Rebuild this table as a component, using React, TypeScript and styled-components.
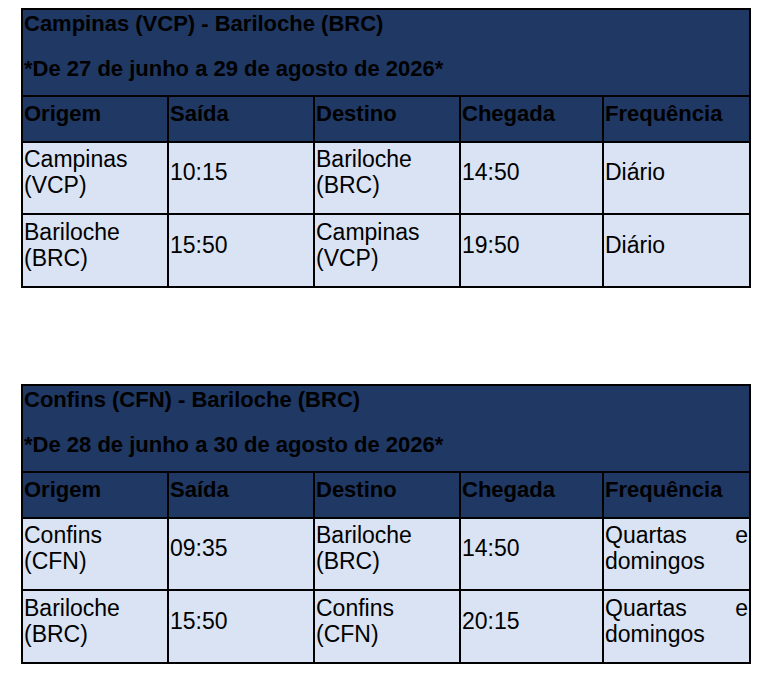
import React from 'react';
import styled, { createGlobalStyle } from 'styled-components';

const GlobalStyle = createGlobalStyle`
  html, body {
    margin: 0;
    padding: 0;
    background: #fff;
  }
  body {
    font-family: "Liberation Sans", Arial, sans-serif;
    color: #000;
  }
`;

const Page = styled.div`
  display: flex;
  flex-direction: column;
  gap: 96px;
  padding: 8px 0 0 21px;
`;

const Table = styled.div`
  display: grid;
  width: 730px;
  grid-template-columns: 144px 144px 144px 141px 145px;
  grid-template-rows: 85px 44px 70px 71px;
  gap: 2px;
  padding: 2px;
  box-sizing: border-box;
  background: #000;
`;

const TitleBlock = styled.div`
  grid-column: 1 / -1;
  background: #1f3864;
  display: flex;
  flex-direction: column;
  padding: 2px 0 0 1px;
`;

const Title = styled.div`
  font-size: 22px;
  font-weight: bold;
  line-height: 24px;
  height: 24px;
  margin-bottom: 21px;
`;

const HeadCell = styled.div`
  background: #1f3864;
  font-size: 22px;
  font-weight: bold;
  line-height: 24px;
  padding: 5px 0 0 1px;
`;

const Cell = styled.div<{ $justify?: boolean }>`
  background: #dae3f3;
  font-size: 23px;
  line-height: 26px;
  display: flex;
  align-items: center;
  padding: 0 1px 12px 1px;
  text-align: ${(p) => (p.$justify ? 'justify' : 'left')};
`;

const CellText = styled.div`
  width: 100%;
`;

type Flight = {
  origem: string;
  saida: string;
  destino: string;
  chegada: string;
  frequencia: string;
};

type Route = {
  title: string;
  period: string;
  flights: Flight[];
};

const routes: Route[] = [
  {
    title: 'Campinas (VCP) - Bariloche (BRC)',
    period: '*De 27 de junho a 29 de agosto de 2026*',
    flights: [
      { origem: 'Campinas (VCP)', saida: '10:15', destino: 'Bariloche (BRC)', chegada: '14:50', frequencia: 'Diário' },
      { origem: 'Bariloche (BRC)', saida: '15:50', destino: 'Campinas (VCP)', chegada: '19:50', frequencia: 'Diário' },
    ],
  },
  {
    title: 'Confins (CFN) - Bariloche (BRC)',
    period: '*De 28 de junho a 30 de agosto de 2026*',
    flights: [
      { origem: 'Confins (CFN)', saida: '09:35', destino: 'Bariloche (BRC)', chegada: '14:50', frequencia: 'Quartas e domingos' },
      { origem: 'Bariloche (BRC)', saida: '15:50', destino: 'Confins (CFN)', chegada: '20:15', frequencia: 'Quartas e domingos' },
    ],
  },
];

const headers = ['Origem', 'Saída', 'Destino', 'Chegada', 'Frequência'];

// "Campinas (VCP)" breaks before the code in the original
const TwoLine: React.FC<{ text: string }> = ({ text }) => {
  const i = text.indexOf(' (');
  if (i < 0) return <>{text}</>;
  return (
    <>
      {text.slice(0, i)}
      <br />
      {text.slice(i + 1)}
    </>
  );
};

export default function App() {
  return (
    <>
      <GlobalStyle />
      <Page>
        {routes.map((r) => (
          <Table key={r.title}>
            <TitleBlock>
              <Title>{r.title}</Title>
              <Title>{r.period}</Title>
            </TitleBlock>
            {headers.map((h) => (
              <HeadCell key={h}>{h}</HeadCell>
            ))}
            {r.flights.map((f, i) => (
              <React.Fragment key={i}>
                <Cell><CellText><TwoLine text={f.origem} /></CellText></Cell>
                <Cell><CellText>{f.saida}</CellText></Cell>
                <Cell><CellText><TwoLine text={f.destino} /></CellText></Cell>
                <Cell><CellText>{f.chegada}</CellText></Cell>
                <Cell $justify><CellText>{f.frequencia}</CellText></Cell>
              </React.Fragment>
            ))}
          </Table>
        ))}
      </Page>
    </>
  );
}
